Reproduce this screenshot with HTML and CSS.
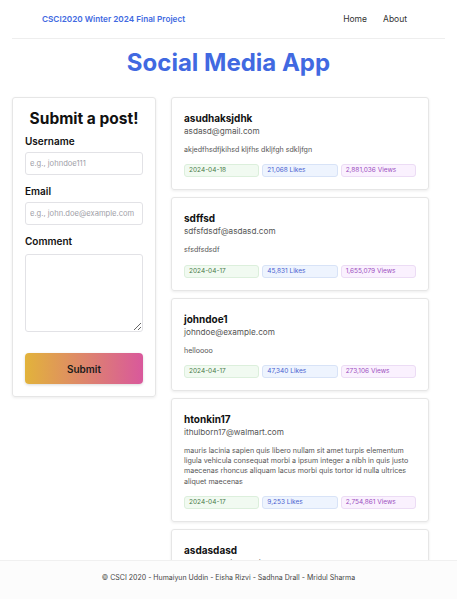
FILE: index.html
```html
<!DOCTYPE html>
<html>
<head>
<meta charset="utf-8">
<link rel="stylesheet" href="styles.css">
</head>
<body>
<header class="topbar">
  <a class="brand" href="#">CSCI2020 Winter 2024 Final Project</a>
  <nav class="links">
    <a href="#">Home</a>
    <a href="#">About</a>
  </nav>
</header>
<h1 class="title">Social Media App</h1>
<main class="layout">
  <section class="form-card">
    <h2 class="form-title">Submit a post!</h2>
    <label class="label">Username</label>
    <input class="field" type="text" placeholder="e.g., johndoe111">
    <label class="label">Email</label>
    <input class="field" type="text" placeholder="e.g., john.doe@example.com">
    <label class="label">Comment</label>
    <textarea class="field area"></textarea>
    <button class="submit">Submit</button>
  </section>
  <section class="posts">
    <article class="post">
      <div class="name">asudhaksjdhk</div>
      <div class="email">asdasd@gmail.com</div>
      <p class="body">akjedfhsdfjkihsd kljfhs dkljfgh sdkljfgn</p>
      <div class="badges">
        <span class="badge date">2024-04-18</span>
        <span class="badge likes">21,068 Likes</span>
        <span class="badge views">2,881,036 Views</span>
      </div>
    </article>
    <article class="post">
      <div class="name">sdffsd</div>
      <div class="email">sdfsfdsdf@asdasd.com</div>
      <p class="body">sfsdfsdsdf</p>
      <div class="badges">
        <span class="badge date">2024-04-17</span>
        <span class="badge likes">45,831 Likes</span>
        <span class="badge views">1,655,079 Views</span>
      </div>
    </article>
    <article class="post">
      <div class="name">johndoe1</div>
      <div class="email">johndoe@example.com</div>
      <p class="body">helloooo</p>
      <div class="badges">
        <span class="badge date">2024-04-17</span>
        <span class="badge likes">47,340 Likes</span>
        <span class="badge views">273,106 Views</span>
      </div>
    </article>
    <article class="post">
      <div class="name">htonkin17</div>
      <div class="email">ithulborn17@walmart.com</div>
      <p class="body">mauris lacinia sapien quis libero nullam sit amet turpis elementum ligula vehicula consequat morbi a ipsum integer a nibh in quis justo maecenas rhoncus aliquam lacus morbi quis tortor id nulla ultrices aliquet maecenas</p>
      <div class="badges">
        <span class="badge date">2024-04-17</span>
        <span class="badge likes">9,253 Likes</span>
        <span class="badge views">2,754,861 Views</span>
      </div>
    </article>
    <article class="post">
      <div class="name">asdasdasd</div>
      <div class="email">randomemail@gmail.com</div>
      <p class="body">random text here</p>
      <div class="badges">
        <span class="badge date">2024-04-16</span>
        <span class="badge likes">1,000 Likes</span>
        <span class="badge views">10,000 Views</span>
      </div>
    </article>
  </section>
</main>
<footer class="footer">© CSCI 2020 - Humaiyun Uddin - Eisha Rizvi - Sadhna Drall - Mridul Sharma</footer>
</body>
</html>
```
FILE: styles.css
```css
* { box-sizing: border-box; }
html, body { margin: 0; padding: 0; }
body {
  font-family: Inter, "Noto Sans", sans-serif;
  background: #ffffff;
  color: #111;
  padding-bottom: 60px;
}
a { text-decoration: none; }
.topbar {
  margin: 0 12px;
  height: 39px;
  padding: 0 38px 0 30px;
  display: flex;
  align-items: center;
  justify-content: space-between;
  border-bottom: 1px solid #eeeeee;
}
.brand {
  color: #4169e1;
  font-weight: 600;
  font-size: 8.2px;
}
.links { display: flex; gap: 16px; }
.links a { color: #333; font-size: 8.5px; }
.title {
  margin: 8px 0 18px;
  text-align: center;
  font-size: 24px;
  font-weight: 700;
  color: #4169e1;
  line-height: 32px;
}
.layout {
  display: grid;
  grid-template-columns: 144px 258px;
  gap: 15px;
  padding-left: 12px;
  align-items: start;
}
.form-card {
  border: 1px solid #e6e6e6;
  border-radius: 3px;
  box-shadow: 0 1px 3px rgba(0,0,0,0.08);
  padding: 10px 12px 12px;
  display: flex;
  flex-direction: column;
}
.form-title {
  margin: 0 0 4px;
  text-align: center;
  font-size: 15.5px;
  font-weight: 700;
  line-height: 22px;
  white-space: nowrap;
}
.label {
  font-size: 10px;
  font-weight: 600;
  margin-bottom: 4px;
  line-height: 14px;
}
.field {
  width: 100%;
  height: 23px;
  border: 1px solid #e2e2e6;
  border-radius: 3px;
  padding: 0 4px;
  font-family: inherit;
  font-size: 7.6px;
  margin-bottom: 9px;
}
.field::placeholder { color: #a0a0a8; }
.area { height: 78px; margin-top: 2px; margin-bottom: 21px; resize: vertical; }
.submit {
  height: 31px;
  border: none;
  border-radius: 4px;
  background: linear-gradient(90deg, #e2b33b, #d9589c);
  font-family: inherit;
  font-weight: 600;
  font-size: 10px;
  color: #1a1a1a;
  box-shadow: 0 1px 3px rgba(0,0,0,0.15);
}
.posts { display: flex; flex-direction: column; gap: 7px; }
.post {
  border: 1px solid #e6e6e6;
  border-radius: 3px;
  box-shadow: 0 1px 3px rgba(0,0,0,0.08);
  padding: 13px 12px 12px;
}
.name { font-size: 10px; font-weight: 700; line-height: 14px; }
.email { font-size: 8.2px; color: #555; line-height: 12px; }
.body {
  margin: 8px 0 9px;
  font-size: 7.1px;
  line-height: 10.3px;
  color: #555;
}
.badges { display: grid; grid-template-columns: 1fr 1fr 1fr; gap: 3px; }
.badge {
  font-size: 6.5px;
  line-height: 11px;
  padding: 0 4px;
  border-radius: 3px;
  border: 1px solid;
}
.date { background: #f1faf1; border-color: #dcefdc; color: #4a7a4a; }
.likes { background: #eef4fe; border-color: #d8e3f7; color: #4a5fd0; }
.views { background: #faf1fe; border-color: #ecdcf5; color: #9a4fc0; }
.footer {
  position: fixed;
  left: 0; right: 0; bottom: 0;
  height: 39px;
  background: #fcfcfc;
  border-top: 1px solid #f0f0f0;
  display: flex;
  align-items: center;
  justify-content: center;
  font-size: 7px;
  color: #444;
  padding-bottom: 6px;
}
```
